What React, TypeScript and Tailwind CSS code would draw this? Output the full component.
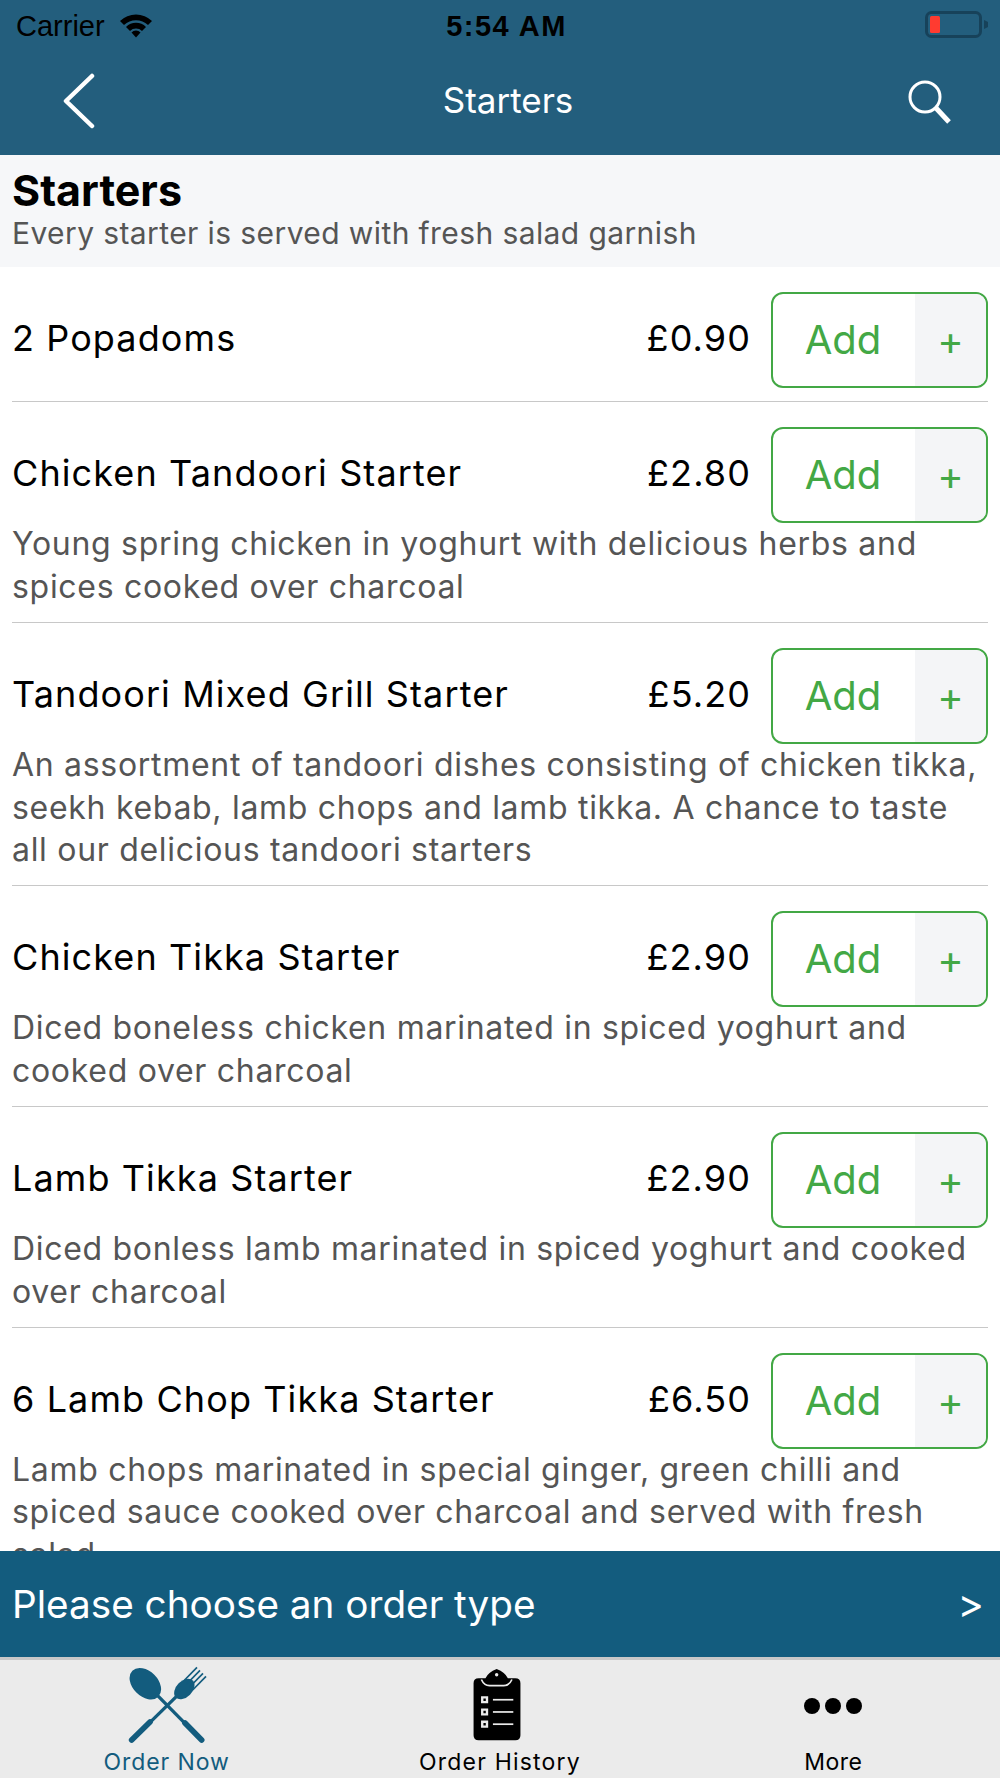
const items = [
  { name: "2 Popadoms", price: "£0.90", desc: [] as string[] },
  { name: "Chicken Tandoori Starter", price: "£2.80", desc: ["Young spring chicken in yoghurt with delicious herbs and", "spices cooked over charcoal"] },
  { name: "Tandoori Mixed Grill Starter", price: "£5.20", desc: ["An assortment of tandoori dishes consisting of chicken tikka,", "seekh kebab, lamb chops and lamb tikka. A chance to taste", "all our delicious tandoori starters"] },
  { name: "Chicken Tikka Starter", price: "£2.90", desc: ["Diced boneless chicken marinated in spiced yoghurt and", "cooked over charcoal"] },
  { name: "Lamb Tikka Starter", price: "£2.90", desc: ["Diced bonless lamb marinated in spiced yoghurt and cooked", "over charcoal"] },
  { name: "6 Lamb Chop Tikka Starter", price: "£6.50", desc: ["Lamb chops marinated in special ginger, green chilli and", "spiced sauce cooked over charcoal and served with fresh", "salad"] },
];

function Row({ item }: { item: (typeof items)[number] }) {
  return (
    <div className="mx-[12px] border-b border-[#c8c8c8] pt-[25px] pb-[13px]">
      <div className="flex h-[96px] items-center">
        <div className="mb-[4px] flex-1 text-[36px] tracking-[1.1px] text-black">{item.name}</div>
        <div className="mb-[4px] mr-[20px] text-[36px] tracking-[1.1px] text-black">{item.price}</div>
        <div className="flex h-[96px] w-[217px] overflow-hidden rounded-[12px] border-[2.5px] border-[#43a845] text-[#43a845]">
          <div className="flex flex-1 items-center justify-center pr-[2px] text-[40px]">Add</div>
          <div className="flex w-[71px] items-center justify-center bg-[#f4f5f7] pt-[2px] text-[40px]">+</div>
        </div>
      </div>
      {item.desc.map((line) => (
        <div key={line} className="whitespace-nowrap text-[32px] leading-[42.85px] tracking-[0.7px] text-[#555555]">{line}</div>
      ))}
    </div>
  );
}

export default function App() {
  return (
    <div className="flex h-[1778px] w-[1000px] flex-col overflow-hidden bg-white font-['Inter',sans-serif]">
      <div className="h-[155px] shrink-0 bg-[#235e7d]">
        <div className="flex h-[50px] items-center justify-between pl-[16px] pr-[11px] pt-[4px] font-['Liberation_Sans',sans-serif] text-[29px] text-black">
          <div className="flex w-[300px] items-center gap-[14px]">
            <span>Carrier</span>
            <svg className="mb-[4px]" width="34" height="25" viewBox="0 0 34 25">
              <path d="M1 8 A23 23 0 0 1 33 8 L29 12 A17.5 17.5 0 0 0 5 12 Z" fill="#000" />
              <path d="M7 14 A14 14 0 0 1 27 14 L23 18 A8.5 8.5 0 0 0 11 18 Z" fill="#000" />
              <path d="M12.5 19.5 A6 6 0 0 1 21.5 19.5 L17 24.5 Z" fill="#000" />
            </svg>
          </div>
          <span className="ml-[8px] font-bold tracking-[1.5px]">5:54 AM</span>
          <div className="flex w-[300px] items-center justify-end">
            <svg className="mb-[4px]" width="64" height="28" viewBox="0 0 64 28">
              <rect x="1.5" y="1.5" width="54" height="24" rx="5" fill="none" stroke="#17425a" strokeWidth="3" />
              <rect x="5" y="5" width="10" height="17" rx="1.5" fill="#ff3b30" />
              <path d="M59 9 L63 11 L63 16 L59 18 Z" fill="#17425a" />
            </svg>
          </div>
        </div>
        <div className="flex h-[105px] items-center justify-between pl-[62px] pr-[48px]">
          <svg className="mb-[4px]" width="34" height="56" viewBox="0 0 34 56" fill="none" stroke="#fff" strokeWidth="4.5" strokeLinecap="round" strokeLinejoin="round">
            <path d="M30 3 L4 28 L30 53" />
          </svg>
          <span className="mb-[5px] ml-[12px] text-[35px] text-white">Starters</span>
          <svg width="44" height="46" viewBox="0 0 44 46" fill="none" stroke="#fff">
            <circle cx="17" cy="17" r="15" strokeWidth="3" />
            <path d="M28 28 L41 42" strokeWidth="5" />
          </svg>
        </div>
      </div>

      <div className="h-[112px] shrink-0 bg-[#f6f7f9] px-[12px] pt-[12px]">
        <div className="text-[43px] font-bold leading-[46px] text-black">Starters</div>
        <div className="text-[30px] leading-[40px] tracking-[0.4px] text-[#555555]">Every starter is served with fresh salad garnish</div>
      </div>

      <div className="min-h-0 flex-1 overflow-hidden">
        {items.map((item) => (
          <Row key={item.name} item={item} />
        ))}
      </div>

      <div className="flex h-[106px] shrink-0 items-center justify-between bg-[#135c7e] pl-[12px] pr-[16px] text-white">
        <span className="text-[38.7px]">Please choose an order type</span>
        <span className="text-[40px]">&gt;</span>
      </div>

      <div className="grid h-[121px] shrink-0 grid-cols-3 border-t-[3px] border-[#c8c8c8] bg-[#ebebeb]">
        <div className="flex flex-col items-center">
          <svg className="mt-[3px]" width="84" height="84" viewBox="130 40 252 252">
            <ellipse cx="191" cy="102" rx="55" ry="38" transform="rotate(45 191 102)" fill="#135c7e" />
            <path d="M225 135 L358 270" stroke="#135c7e" strokeWidth="10" fill="none" />
            <path d="M290 135 L150 272" stroke="#135c7e" strokeWidth="10" fill="none" />
            <path d="M360 271 L310 220" stroke="#135c7e" strokeWidth="17" strokeLinecap="round" />
            <path d="M150 271 L205 217" stroke="#135c7e" strokeWidth="17" strokeLinecap="round" />
            <ellipse cx="308" cy="118" rx="36" ry="24" transform="rotate(-45 308 118)" fill="#135c7e" />
            <g stroke="#135c7e" strokeWidth="5">
              <path d="M306 94 L346 53" />
              <path d="M315 103 L355 62" />
              <path d="M324 112 L364 71" />
              <path d="M333 121 L373 80" />
            </g>
          </svg>
          <span className="text-[23px] leading-[30px] tracking-[0.9px] text-[#135c7e]">Order Now</span>
        </div>
        <div className="flex flex-col items-center">
          <svg className="ml-[-5px] mt-[9px]" width="48" height="72" viewBox="165 35 138 212">
            <path d="M180 62 H200 Q208 45 233 35 Q258 45 266 62 H288 Q303 62 303 77 V230 Q303 245 288 245 H180 Q165 245 165 230 V77 Q165 62 180 62 Z" fill="#000" />
            <path d="M188 66 Q196 84 212 84 H254 Q270 84 278 66" stroke="#ebebeb" strokeWidth="5" fill="none" />
            <circle cx="233" cy="52" r="5" fill="#ebebeb" />
            <g fill="#ebebeb">
              <path fillRule="evenodd" d="M187 115 H208 V136 H187 Z M194 122 V129 H201 V122 Z" />
              <path fillRule="evenodd" d="M187 151 H208 V172 H187 Z M194 158 V165 H201 V158 Z" />
              <path fillRule="evenodd" d="M187 187 H208 V208 H187 Z M194 194 V201 H201 V194 Z" />
              <rect x="222" y="123" width="60" height="5" />
              <rect x="222" y="159" width="60" height="5" />
              <rect x="222" y="195" width="60" height="5" />
            </g>
          </svg>
          <span className="mt-[6px] text-[23px] leading-[30px] tracking-[1.2px] text-black">Order History</span>
        </div>
        <div className="flex flex-col items-center">
          <div className="mt-[28px] flex h-[36px] items-center gap-[5px]">
            <div className="size-[16px] rounded-full bg-black" />
            <div className="size-[16px] rounded-full bg-black" />
            <div className="size-[16px] rounded-full bg-black" />
          </div>
          <span className="mt-[23px] text-[23px] leading-[30px] tracking-[0.5px] text-black">More</span>
        </div>
      </div>
    </div>
  );
}
